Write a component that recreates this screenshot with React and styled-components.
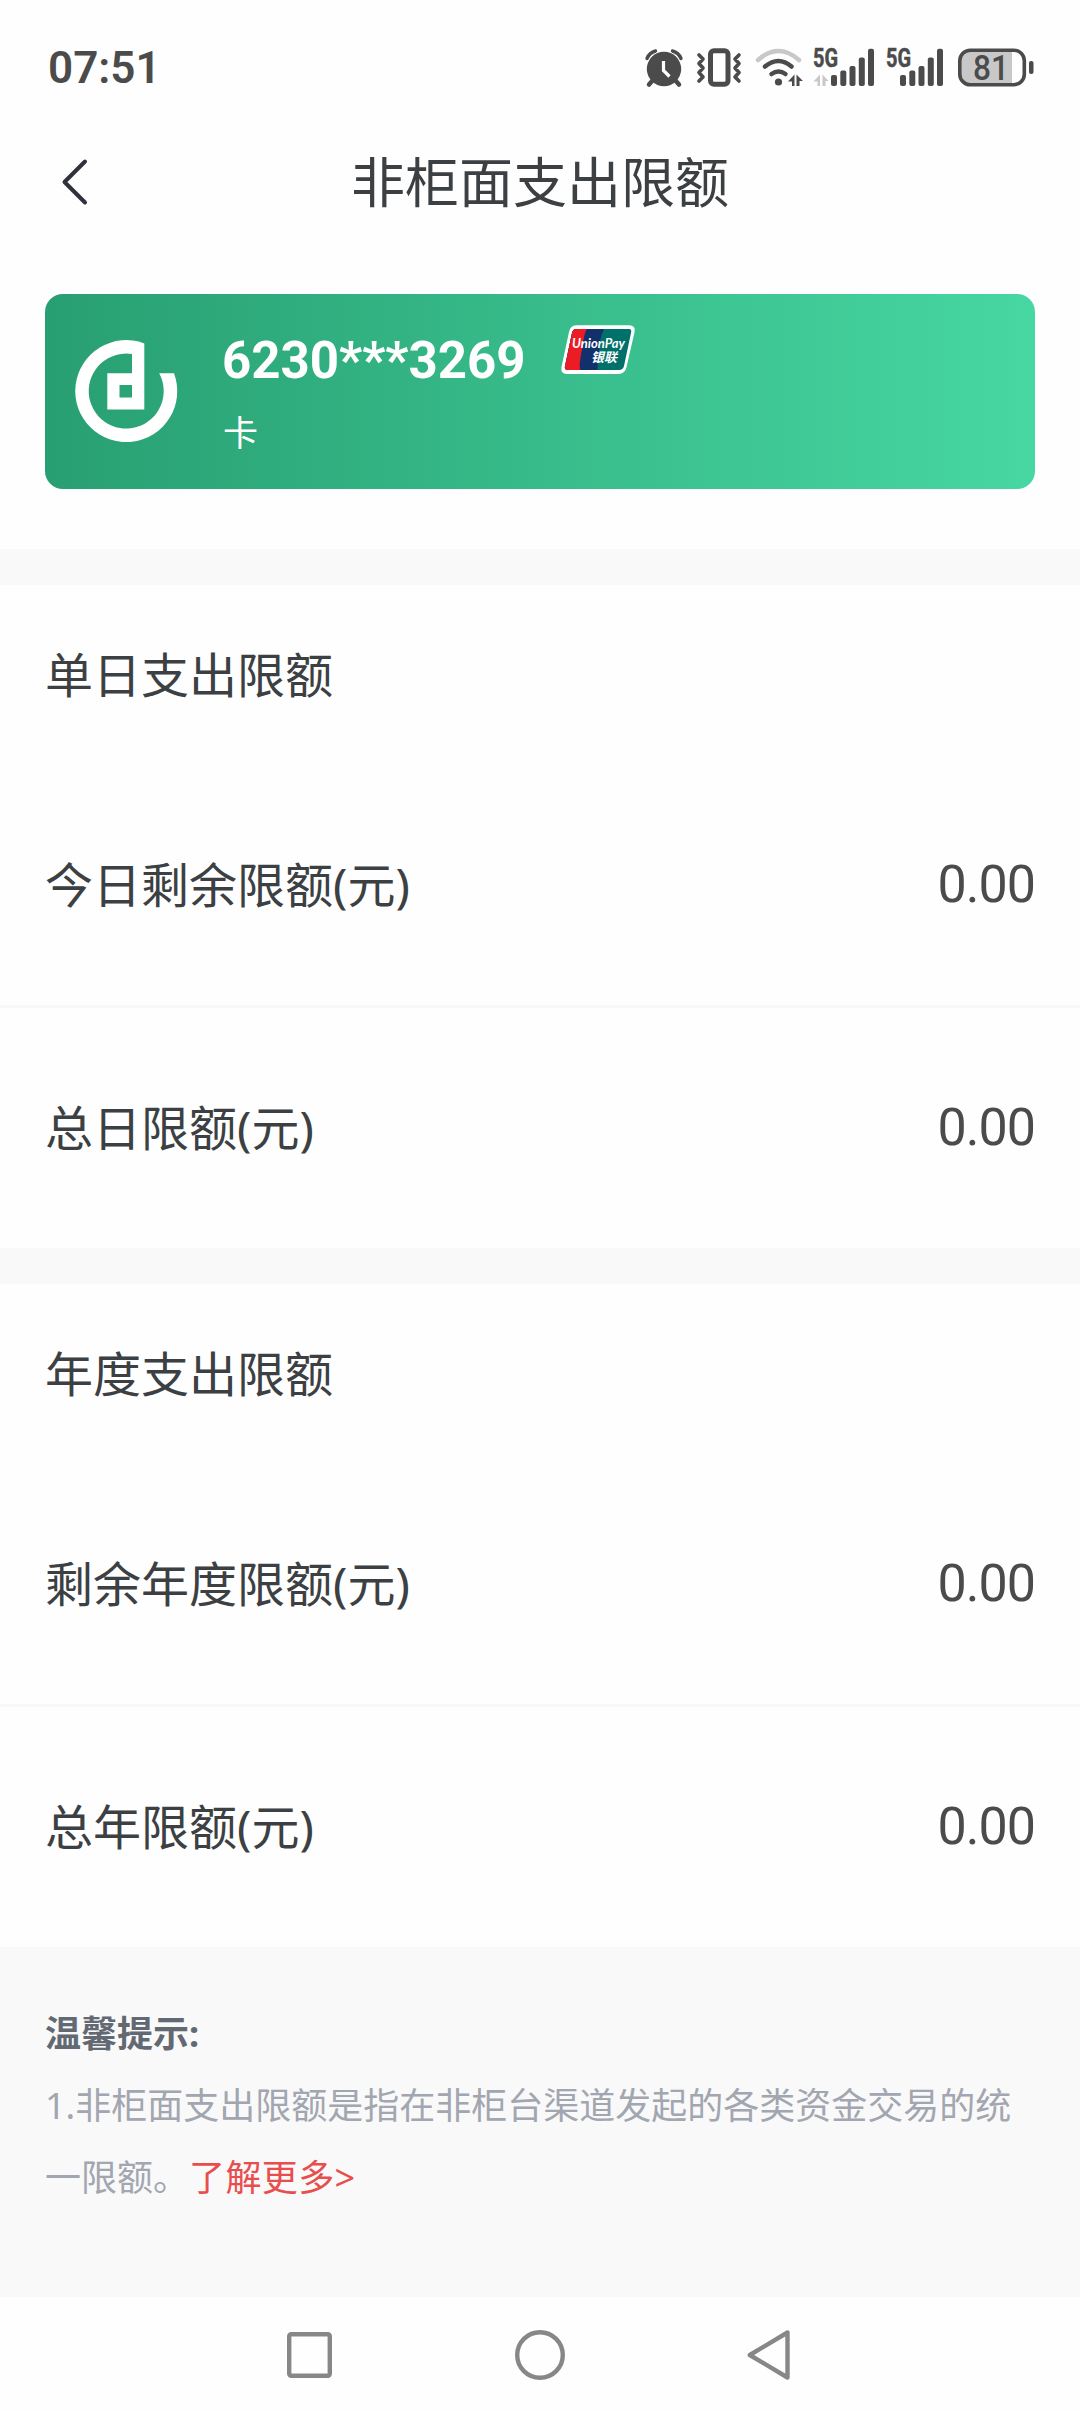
import React from "react";
import styled, { createGlobalStyle } from "styled-components";

const sections = [
  {
    title: "单日支出限额",
    rows: [
      { label: "今日剩余限额(元)", value: "0.00" },
      { label: "总日限额(元)", value: "0.00" },
    ],
  },
  {
    title: "年度支出限额",
    rows: [
      { label: "剩余年度限额(元)", value: "0.00" },
      { label: "总年限额(元)", value: "0.00" },
    ],
  },
];

const Signal = ({ width, textX, faded }) => (
  <svg width={width} height="52" viewBox={`0 -6 ${width} 52`}>
    <text
      x={textX}
      y="19"
      fontFamily="Roboto, sans-serif"
      fontWeight="700"
      fontSize="25"
      textLength="25"
      lengthAdjust="spacingAndGlyphs"
      fill="#4b4b4b"
      stroke="#4b4b4b"
      strokeWidth="0.5"
    >
      5G
    </text>
    {faded && (
      <path fill="#c8c8c8" d="M7 26.5V38H4.5v-4.5H.5zM9.5 26.5l6 6.5h-3v5h-3z" />
    )}
    <g fill="#4b4b4b">
      <rect x="18" y="27" width="6" height="11" rx="2" />
      <rect x="27.3" y="22.5" width="6" height="15.5" rx="2" />
      <rect x="36.5" y="18" width="6" height="20" rx="2" />
      <rect x="45.8" y="9.5" width="6" height="28.5" rx="2" />
      <rect x="55" y="0.8" width="6" height="37.2" rx="2" />
    </g>
  </svg>
);

const App = () => {
  return (
    <>
      <GlobalStyle />
      <Page>
        <StatusBar>
          <Time>07:51</Time>
          <StatusIcons>
            <svg width="39" height="40" viewBox="0 0 39 40">
              <g stroke="#4b4b4b" strokeLinecap="round" fill="none">
                <path strokeWidth="3.4" d="M2 10.5Q4.5 4.5 10.5 3M36 10.5Q33.5 4.5 27.5 3" />
                <path strokeWidth="4.5" d="M8 32l-4 4.5M30 32l4 4.5" />
              </g>
              <circle cx="19" cy="21" r="17.2" fill="#4b4b4b" />
              <path d="M18.5 13v9.5l6 6" stroke="#fff" strokeWidth="3.2" fill="none" />
            </svg>
            <svg width="47" height="40" viewBox="0 0 47 40">
              <g stroke="#4b4b4b" fill="none" strokeLinecap="round" strokeLinejoin="round">
                <rect x="14.5" y="2.8" width="17.5" height="33.4" rx="3.5" strokeWidth="5" />
                <path
                  strokeWidth="3.6"
                  d="M3 7l4 4-4 4.5 4 4.5-4 4.5 4 4.5-4 4M43 7l-4 4 4 4.5-4 4.5 4 4.5-4 4.5 4 4"
                />
              </g>
            </svg>
            <svg width="46" height="40" viewBox="0 0 46 40">
              <g fill="none" strokeWidth="4.5" strokeLinecap="round">
                <path stroke="#c8c8c8" d="M3 12Q23.5-6 44 12" />
                <path stroke="#4b4b4b" d="M10 18.5Q23.5 7.5 36.5 18.5" />
                <path stroke="#4b4b4b" d="M16.5 26Q23.5 21 30.5 26" />
              </g>
              <circle cx="23.5" cy="34" r="3.6" fill="#4b4b4b" />
              <path fill="#4b4b4b" d="M39.5 26.5V38H37v-4.5h-4zM41.5 26.5L48 33h-3.5v5h-3z" />
            </svg>
            <Signal width={57} textX={0} faded />
            <Signal width={64} textX={4} />
            <svg width="76" height="52" viewBox="0 -6 76 52">
              <path d="M11 3.5h43v33H11a8 8 0 0 1-8-8v-17a8 8 0 0 1 8-8z" fill="#c8c8c8" />
              <rect
                x="1.8"
                y="2.2"
                width="64.5"
                height="34.5"
                rx="10.5"
                fill="none"
                stroke="#4b4b4b"
                strokeWidth="3.6"
              />
              <rect x="71" y="13" width="4.5" height="13" rx="2" fill="#4b4b4b" />
              <text
                x="33"
                y="31.8"
                textAnchor="middle"
                fontFamily="Roboto, sans-serif"
                fontWeight="500"
                fontSize="35"
                textLength="36"
                lengthAdjust="spacingAndGlyphs"
                fill="#4b4b4b"
              >
                81
              </text>
            </svg>
          </StatusIcons>
        </StatusBar>

        <Header>
          <BackButton aria-label="返回">
            <svg width="26" height="46" viewBox="0 0 26 46">
              <path
                d="M23 2.5L2.5 23 23 43.5"
                fill="none"
                stroke="#2f323b"
                strokeWidth="4"
                strokeLinecap="round"
                strokeLinejoin="round"
              />
            </svg>
          </BackButton>
          <h1>非柜面支出限额</h1>
        </Header>

        <CardArea>
          <BankCard>
            <BankLogo width="102" height="102" viewBox="0 0 102 102">
              <path
                fill="#fff"
                fillRule="evenodd"
                d="M69.3 3.4A51 51 0 1 0 99 33.2H84.2A37.5 37.5 0 1 1 57 14V33.2H32.3V69.5H69.3zM44.500 45h12.500v12.500H44.500z"
              />
            </BankLogo>
            <CardInfo>
              <CardNumber>
                <span>6230***3269</span>
                <svg width="74" height="50" viewBox="0 0 74 50">
                  <defs>
                    <clipPath id="unionpay">
                      <path d="M15 4h53q3 0 2 4l-7 33q-1 4-5 4H7q-4 0-3-4L11 8q1-4 4-4z" />
                    </clipPath>
                  </defs>
                  <path
                    fill="#fff"
                    d="M15 .3h53q7 0 5.5 7L65.5 42q-1.5 7-8 7H6q-7 0-5.5-7L8 7Q9.5.3 15 .3z"
                  />
                  <g clipPath="url(#unionpay)">
                    <rect width="74" height="50" fill="#00716a" />
                    <path fill="#12306b" d="M0 0h46q-5 5-7 16l-2 22q-1 5 0 12H0z" />
                    <path fill="#ec1c24" d="M0 0h29q-4 3-6 12l-4 24q-1 6 1 14H0z" />
                  </g>
                  <g fill="#fff" fontStyle="italic" fontWeight="700">
                    <text
                      x="11"
                      y="23"
                      fontSize="12.5"
                      fontFamily="Lato, sans-serif"
                      textLength="53"
                      lengthAdjust="spacingAndGlyphs"
                    >
                      UnionPay
                    </text>
                    <text x="30" y="36.5" fontSize="13" fontFamily="Noto Sans CJK SC, sans-serif">
                      银联
                    </text>
                  </g>
                </svg>
              </CardNumber>
              <CardType>卡</CardType>
            </CardInfo>
          </BankCard>
        </CardArea>

        {sections.map(section => (
          <Section key={section.title}>
            <h2>{section.title}</h2>
            {section.rows.map(row => (
              <LimitRow key={row.label}>
                <span>{row.label}</span>
                <Amount>{row.value}</Amount>
              </LimitRow>
            ))}
          </Section>
        ))}

        <Tips>
          <h3>温馨提示:</h3>
          <p>
            1.非柜面支出限额是指在非柜台渠道发起的各类资金交易的统一限额。
            <MoreLink>了解更多&gt;</MoreLink>
          </p>
        </Tips>

        <NavBar>
          <svg width="46" height="50" viewBox="0 0 46 50">
            <rect x="2.2" y="4.2" width="40.6" height="41.6" rx="2" />
          </svg>
          <svg width="50" height="50" viewBox="0 0 50 50">
            <circle cx="25" cy="25" r="22.8" />
          </svg>
          <svg width="44" height="50" viewBox="0 0 44 50">
            <path d="M40.5 2.5v45L2.8 25z" />
          </svg>
        </NavBar>
      </Page>
    </>
  );
};

const GlobalStyle = createGlobalStyle`
  * {
    box-sizing: border-box;
    margin: 0;
    padding: 0;
  }
  body {
    background: #fff;
    font-family: "Noto Sans", "Noto Sans CJK SC", sans-serif;
    color: #3c4043;
  }
  svg {
    display: block;
    flex: none;
    overflow: visible;
  }
`;

const Page = styled.div`
  display: flex;
  flex-direction: column;
  width: 1080px;
  height: 2412px;
  background: #fefefe;
`;

const StatusBar = styled.div`
  display: flex;
  justify-content: space-between;
  align-items: center;
  height: 136px;
  padding: 0 46px 0 48px;
`;

const Time = styled.span`
  font-family: Roboto, sans-serif;
  font-size: 44px;
  font-weight: 600;
  color: #4b4b4b;
`;

const StatusIcons = styled.div`
  display: flex;
  align-items: center;
  gap: 12px;
`;

const Header = styled.header`
  display: grid;
  grid-template-columns: 120px 1fr 120px;
  align-items: center;
  height: 92px;
  h1 {
    font-size: 54px;
    font-weight: 400;
    line-height: 80px;
    text-align: center;
  }
`;

const BackButton = styled.button`
  justify-self: start;
  padding-left: 62px;
  border: none;
  background: none;
`;

const CardArea = styled.div`
  height: 321px;
  padding: 66px 45px 0;
`;

const BankCard = styled.div`
  display: flex;
  align-items: flex-start;
  height: 195px;
  padding-left: 30px;
  border-radius: 18px;
  background: linear-gradient(90deg, #289f72, #47d7a2);
  color: #fff;
`;

const BankLogo = styled.svg`
  margin-top: 46px;
`;

const CardInfo = styled.div`
  padding: 31px 0 0 45px;
`;

const CardNumber = styled.div`
  display: flex;
  gap: 35px;
  height: 74px;
  font-family: Roboto, sans-serif;
  font-size: 51px;
  font-weight: 700;
  line-height: 71px;
`;

const CardType = styled.p`
  padding-left: 1px;
  font-size: 35px;
  line-height: 68px;
`;

const Section = styled.section`
  border-top: 36px solid #f9f9f9;
  h2 {
    height: 180px;
    padding: 0 45px;
    font-size: 48px;
    font-weight: 400;
    line-height: 180px;
  }
`;

const LimitRow = styled.div`
  display: flex;
  justify-content: space-between;
  align-items: center;
  height: 240px;
  padding: 0 45px;
  font-size: 48px;
  line-height: 72px;
  & + & {
    height: 243px;
    border-top: 3px solid #f8f8f8;
  }
`;

const Amount = styled.span`
  font-family: Roboto, sans-serif;
  font-size: 52px;
  line-height: 74px;
  letter-spacing: -1px;
  color: #4b4b4b;
`;

const Tips = styled.div`
  flex: 1;
  padding: 51px 45px 0;
  background: #f9f9f9;
  font-size: 36px;
  line-height: 72px;
  color: #a2a6b0;
  h3 {
    font-size: 36px;
    font-weight: 700;
    color: #636973;
  }
`;

const MoreLink = styled.a`
  letter-spacing: 0.4px;
  color: #e84e4e;
`;

const NavBar = styled.nav`
  display: flex;
  justify-content: center;
  align-items: center;
  gap: 182px;
  height: 115px;
  padding-right: 3px;
  svg {
    fill: none;
    stroke: #878787;
    stroke-width: 4.4;
    stroke-linejoin: round;
  }
`;

export default App;
